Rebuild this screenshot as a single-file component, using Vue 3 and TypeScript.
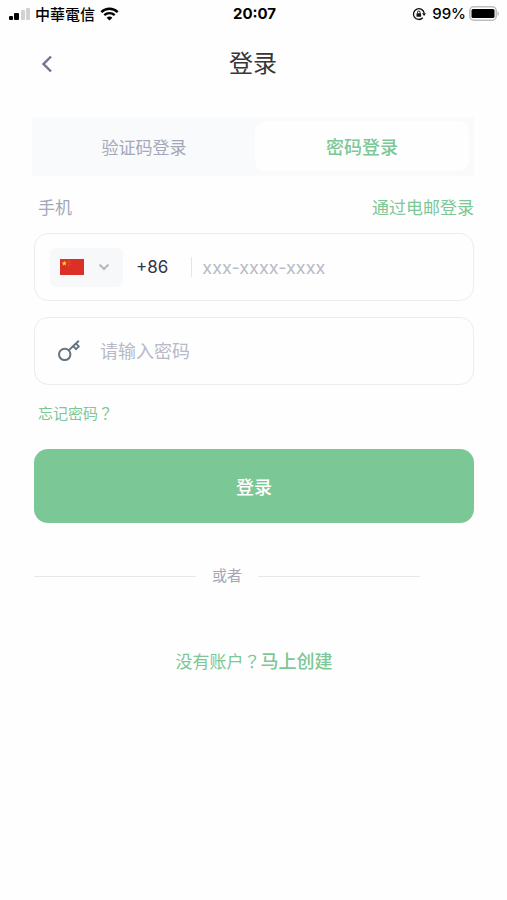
<script setup lang="ts">
import { ref } from 'vue'

type Mode = 'code' | 'password'

const tabs: { id: Mode; label: string }[] = [
  { id: 'code', label: '验证码登录' },
  { id: 'password', label: '密码登录' },
]
const mode = ref<Mode>('password')
const dialCode = ref('+86')
const phone = ref('')
const password = ref('')
</script>

<template>
  <div class="screen" lang="zh-CN">
    <div class="status">
      <div class="status-left">
        <svg class="signal" width="22" height="12" viewBox="0 0 22 12" aria-hidden="true">
          <rect x="0" y="8" width="4" height="4" rx="1" fill="#000" />
          <rect x="5" y="5" width="5" height="7" rx="1" fill="#000" />
          <rect x="12" y="2" width="4" height="10" rx="1" fill="#d2d2d2" />
          <rect x="17" y="0" width="4" height="12" rx="1" fill="#d2d2d2" />
        </svg>
        <span class="carrier" lang="zh-TW">中華電信</span>
        <svg width="19" height="14" viewBox="0 0 19 14" fill="none" stroke="#000" aria-hidden="true">
          <path d="M1.3 5.1C6 .6 13 .6 17.7 5.1" stroke-width="2.4" />
          <path d="M4.3 8.2C7.2 5.4 11.8 5.4 14.7 8.2" stroke-width="2.3" />
          <path d="M9.5 13.6 6.6 10.7C8.2 9.2 10.8 9.2 12.4 10.7Z" fill="#000" stroke="none" />
        </svg>
      </div>
      <span class="clock">20:07</span>
      <div class="status-right">
        <svg width="14" height="14" viewBox="0 0 14 14" fill="none" stroke="#111" aria-hidden="true">
          <path d="M10.8 10.8A5.4 5.4 0 1 1 12.2 6.2" stroke-width="1.3" />
          <path d="M10 6.2H14L12.1 9Z" fill="#111" stroke="none" />
          <rect x="4.5" y="6.3" width="4.6" height="3.5" rx=".6" fill="#111" stroke="none" />
          <path d="M5.5 6.5V5.3a1.3 1.3 0 0 1 2.6 0V6.5" stroke-width="1" />
        </svg>
        <span class="percent">99%</span>
        <svg width="31" height="15" viewBox="0 0 31 15" aria-hidden="true">
          <rect x=".8" y=".8" width="26.4" height="13.4" rx="4" fill="#fff" stroke="#bdbdbd" stroke-width="1.6" />
          <rect x="2.5" y="3" width="23" height="9" rx="1.5" fill="#000" />
          <path d="M28.5 5.2c2 .7 2 3.9 0 4.6z" fill="#bdbdbd" />
        </svg>
      </div>
    </div>

    <header class="topbar">
      <button class="back" type="button" aria-label="返回">
        <svg width="12" height="18" viewBox="0 0 12 18" fill="none" aria-hidden="true">
          <path d="M10 1.5 2.5 9 10 16.5" stroke="#72738f" stroke-width="2.4" />
        </svg>
      </button>
      <h1>登录</h1>
    </header>

    <main>
      <div class="tabs" role="tablist">
        <button
          v-for="tab in tabs"
          :key="tab.id"
          type="button"
          role="tab"
          class="tab"
          :class="{ active: mode === tab.id }"
          :aria-selected="mode === tab.id"
          @click="mode = tab.id"
        >
          {{ tab.label }}
        </button>
      </div>

      <form @submit.prevent>
        <div class="label-row">
          <label for="phone">手机</label>
          <a href="#email">通过电邮登录</a>
        </div>

        <div class="field">
          <div class="country">
            <svg width="24" height="16" viewBox="0 0 24 16" aria-hidden="true">
              <rect width="24" height="16" fill="#dc3027" />
              <path d="m4.3 1.8.7 1.8h2L5.4 4.8 6 6.7 4.3 5.6 2.6 6.7l.6-1.9L1.6 3.6h2z" fill="#ffd83b" />
              <g fill="#ee8b2d">
                <circle cx="8.3" cy="1.7" r=".5" />
                <circle cx="9.9" cy="3.2" r=".5" />
                <circle cx="9.9" cy="5.3" r=".5" />
                <circle cx="8.3" cy="6.9" r=".5" />
              </g>
            </svg>
            <svg width="12" height="8" viewBox="0 0 12 8" fill="none" aria-hidden="true">
              <path d="M1.5 1.5 6 6l4.5-4.5" stroke="#b4b8c0" stroke-width="2" />
            </svg>
            <select v-model="dialCode" aria-label="国家或地区">
              <option value="+86">+86</option>
            </select>
          </div>
          <span class="dial">{{ dialCode }}</span>
          <input id="phone" v-model="phone" class="phone" type="tel" placeholder="xxx-xxxx-xxxx" />
        </div>

        <div class="field">
          <label class="key" for="password" aria-label="密码">
            <svg width="24" height="24" viewBox="0 0 24 24" fill="none" stroke="#65727f" stroke-width="2" aria-hidden="true">
              <circle cx="7.7" cy="15.4" r="5.7" />
              <path d="M11.7 11.4 21.8 1.8" />
              <path d="m16.2 7.2 2.8 3 2.8-2.7-2.7-2.9" stroke-width="1.8" />
            </svg>
          </label>
          <input id="password" v-model="password" class="password" type="password" placeholder="请输入密码" />
        </div>

        <a class="forgot" href="#forgot" lang="zh-TW">忘记密码？</a>
        <button class="submit" type="submit">登录</button>
      </form>

      <div class="divider"><span>或者</span></div>

      <p class="signup" lang="zh-TW">没有账户？<a href="#signup">马上创建</a></p>
    </main>
  </div>
</template>

<style>
body {
  background: #fefefe;
}
</style>

<style scoped>
.screen {
  font-family: Inter, 'Noto Sans CJK SC', sans-serif;
  color: #363639;
}
.status {
  display: grid;
  grid-template-columns: 1fr auto 1fr;
  align-items: center;
  height: 27px;
  padding: 0 7px 0 9px;
  color: #000;
}
.status-left,
.status-right {
  display: flex;
  align-items: center;
}
.signal {
  margin-right: 4px;
}
.carrier {
  margin-right: 5px;
  font: 500 15px/20px 'Noto Sans CJK TC', sans-serif;
}
.clock {
  font-size: 15px;
  font-weight: 700;
}
.status-right {
  justify-content: flex-end;
}
.percent {
  margin: 0 3px 0 6px;
  font-size: 15px;
  font-weight: 500;
}
.topbar {
  display: grid;
  grid-template-columns: 48px 1fr 48px;
  align-items: center;
  height: 74px;
  padding: 0 24px 0 23px;
}
h1 {
  margin: 0;
  font-size: 24px;
  line-height: 36px;
  font-weight: 400;
  text-align: center;
}
button {
  border: 0;
  font-family: inherit;
  cursor: pointer;
}
.back {
  display: grid;
  place-items: center;
  height: 48px;
  padding: 0;
  background: none;
}
main {
  padding: 16px 33px 16px 34px;
}
.tabs {
  display: grid;
  grid-template-columns: 1fr 1fr;
  gap: 4px;
  height: 50px;
  margin-left: -2px;
  padding: 4px 5px 5px;
  background: #f8fafb;
}
.tab {
  border-radius: 10px;
  background: none;
  padding: 0;
  font-size: 17px;
  color: #a4a7b9;
}
.tab.active {
  background: #fefefe;
  font-size: 18px;
  font-weight: 500;
  color: #7bc795;
}
a {
  color: #7bc795;
  text-decoration: none;
}
.label-row {
  display: flex;
  justify-content: space-between;
  padding: 20px 0 12px 4px;
  font-size: 17px;
  line-height: 25px;
  color: #a4a7b9;
}
.field {
  display: flex;
  align-items: center;
  height: 66px;
  border: 1px solid #ececef;
  border-radius: 14px;
  padding: 0 15px;
  margin-bottom: 16px;
}
.country {
  position: relative;
  display: flex;
  align-items: center;
  gap: 14px;
  height: 39px;
  padding: 0 13px 0 10px;
  border-radius: 6px;
  background: #f6f8f9;
}
.country select {
  position: absolute;
  inset: 0;
  width: 100%;
  opacity: 0;
}
.dial {
  margin: 0 23px 0 13px;
  font-size: 17px;
  color: #353548;
}
input {
  flex: 1;
  min-width: 0;
  border: 0;
  padding: 0;
  outline: 0;
  background: none;
  font-family: inherit;
  font-size: 18px;
  color: #353548;
}
input::placeholder {
  color: #b8bac6;
  opacity: 1;
}
.phone {
  height: 20px;
  padding-left: 10px;
  border-left: 1px solid #e4e5e9;
}
.password {
  height: 30px;
}
.key {
  display: flex;
  margin: 0 19px 0 7px;
}
.forgot {
  display: block;
  width: fit-content;
  margin: 17px 0 0 4px;
  font: 400 15px/22px 'Noto Sans CJK TC', sans-serif;
}
.submit {
  display: block;
  width: 100%;
  height: 74px;
  margin-top: 25px;
  border-radius: 14px;
  background: #7bc795;
  font-size: 18px;
  font-weight: 500;
  color: #fff;
}
.divider {
  display: flex;
  align-items: center;
  gap: 16px;
  margin: 42px 54px 0 0;
  font-size: 15px;
  line-height: 22px;
  color: #a4a7b9;
}
.divider::before,
.divider::after {
  content: '';
  flex: 1;
  height: 1px;
  background: #e7e7ea;
}
.signup {
  margin: 61px 0 0;
  font: 400 17px/25px 'Noto Sans CJK TC', sans-serif;
  text-align: center;
  color: #7bc795;
}
.signup a {
  font-size: 18px;
  font-weight: 500;
}
</style>
